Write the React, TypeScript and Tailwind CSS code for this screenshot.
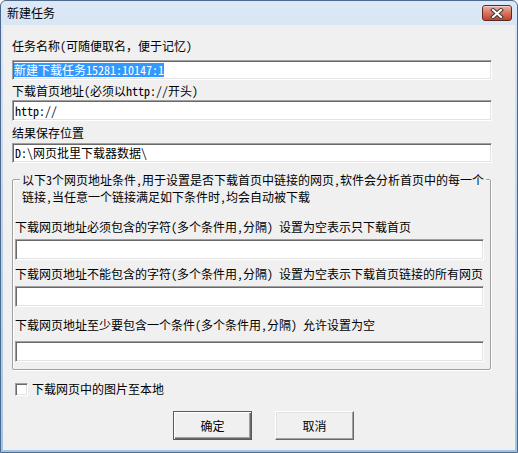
import React from 'react';

const sunken =
  'bg-white border border-t-[#a0a0a0] border-l-[#a0a0a0] border-b-white border-r-white shadow-[inset_1px_1px_0_#696969,inset_-1px_-1px_0_#e3e3e3]';

const Label = ({ text, className = '' }: { text: string; className?: string }) => (
  <div className={`h-[14px] leading-[14px] whitespace-nowrap ${className}`}>{text}</div>
);

const CloseButton = () => (
  <div className="w-[30px] h-[16px] mt-[4px] rounded-[3px] border border-[#5e2720] bg-gradient-to-b from-[#eab1a4] via-[#d9735f] to-[#c1402b] shadow-[inset_0_1px_0_#f6d3ca] flex items-center justify-center">
    <svg width="14" height="11" viewBox="0 0 14 11">
      <path d="M3 2 L11 9 M11 2 L3 9" stroke="#3b3b3b" strokeWidth="4" strokeLinecap="square" />
      <path d="M3 2 L11 9 M11 2 L3 9" stroke="#ffffff" strokeWidth="2" strokeLinecap="square" />
    </svg>
  </div>
);

export default function App() {
  return (
    <div className="w-[518px] h-[453px] flex flex-col border border-[#4d6a8e] rounded-t-[6px] bg-gradient-to-b from-[#dce8f5] via-[#bcd3ec] to-[#9fc6e8] text-[12px] text-black font-['Noto_Sans_Mono_CJK_SC','Noto_Sans_CJK_SC',sans-serif]">
      {/* Title bar */}
      <div className="h-[24px] flex items-start justify-between pl-[6px] pr-[5px]">
        <div className="mt-[5px] leading-[14px] text-[12px] font-['Noto_Sans_CJK_SC',sans-serif]">新建任务</div>
        <CloseButton />
      </div>

      {/* Client area */}
      <div className="flex-1 mx-[2px] mb-[2px] bg-[#f0f0f0] flex flex-col pl-[9px]">
        <Label text="任务名称(可随便取名，便于记忆)" className="mt-[14px]" />
        <div className={`${sunken} w-[480px] h-[20px] mt-[7px] flex items-center pl-[1px]`}>
          <span className="bg-[#3399ff] text-white leading-[14px] whitespace-nowrap">新建下载任务15281:10147:1</span>
        </div>

        <Label text="下载首页地址(必须以http://开头)" className="mt-[4px]" />
        <div className={`${sunken} w-[480px] h-[21px] mt-[2px] flex items-center pl-[2px] leading-[14px]`}>http://</div>

        <Label text="结果保存位置" className="mt-[5px]" />
        <div className={`${sunken} w-[480px] h-[20px] mt-[3px] flex items-center pl-[2px] leading-[14px]`}>D:\网页批里下载器数据\</div>

        {/* Group box */}
        <div className="mt-[16px] w-[479px] border border-[#a0a0a0] rounded-[2px] shadow-[inset_1px_1px_0_#ffffff,1px_1px_0_#ffffff] pl-[2px] pb-[7px] flex flex-col">
          <div className="-mt-[9px] ml-[5px] w-[466px] bg-[#f0f0f0] pl-[2px] leading-[17px] whitespace-nowrap">
            <div>以下3个网页地址条件,用于设置是否下载首页中链接的网页,软件会分析首页中的每一个</div>
            <div>链接,当任意一个链接满足如下条件时,均会自动被下载</div>
          </div>

          <Label text="下载网页地址必须包含的字符(多个条件用,分隔) 设置为空表示只下载首页" className="mt-[15px]" />
          <div className={`${sunken} w-[469px] h-[21px] mt-[5px]`} />

          <Label text="下载网页地址不能包含的字符(多个条件用,分隔) 设置为空表示下载首页链接的所有网页" className="mt-[7px]" />
          <div className={`${sunken} w-[469px] h-[21px] mt-[5px]`} />

          <Label text="下载网页地址至少要包含一个条件(多个条件用,分隔) 允许设置为空" className="mt-[11px]" />
          <div className={`${sunken} w-[469px] h-[21px] mt-[9px]`} />
        </div>

        {/* Checkbox */}
        <div className="mt-[12px] ml-[3px] flex items-center gap-[4px]">
          <div className={`${sunken} w-[13px] h-[13px]`} />
          <span className="leading-[14px]">下载网页中的图片至本地</span>
        </div>

        {/* Buttons */}
        <div className="mt-[15px] flex gap-[23px] pl-[161px]">
          <button className="w-[79px] h-[29px] bg-[#f0f0f0] border border-[#5a5a5a] shadow-[inset_1px_1px_0_#ffffff,inset_-1px_-1px_0_#696969,inset_-2px_-2px_0_#a0a0a0] leading-[14px]">
            确定
          </button>
          <button className="w-[79px] h-[29px] bg-[#f0f0f0] border border-t-white border-l-white border-b-[#696969] border-r-[#696969] shadow-[inset_-1px_-1px_0_#a0a0a0,inset_1px_1px_0_#e3e3e3] leading-[14px]">
            取消
          </button>
        </div>
      </div>
    </div>
  );
}
